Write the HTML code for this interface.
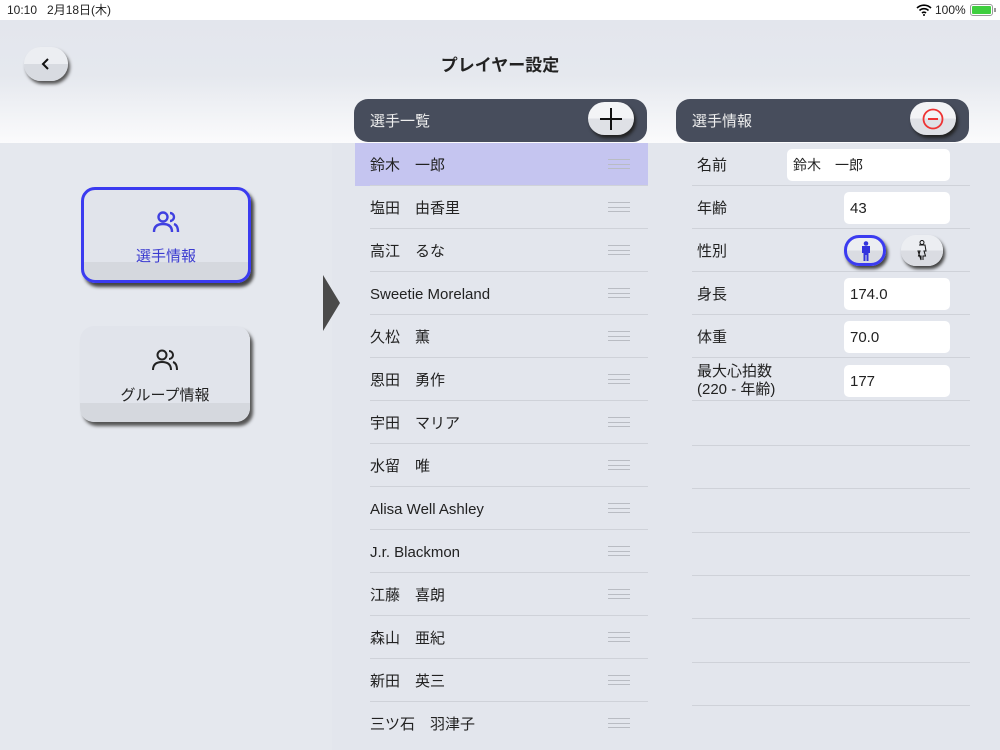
<!DOCTYPE html>
<html><head><meta charset="utf-8"><style>
*{box-sizing:border-box;margin:0;padding:0}
body{width:1000px;height:750px;overflow:hidden;background:#e3e6ed;font-family:"Liberation Sans","Noto Sans CJK JP",sans-serif;color:#222;position:relative}
.abs{position:absolute}
.status{left:0;top:0;width:1000px;height:20px;background:#fff;font-size:12px;line-height:20px}
.hdr{left:0;top:20px;width:1000px;height:123px;background:linear-gradient(#e3e6ed 0%,#e5e8ee 45%,#fbfbfc 100%)}
.title{left:0;top:54px;width:1000px;text-align:center;font-size:17px;font-weight:bold;line-height:24px}
.back{left:24px;top:47px;width:44px;height:34px;border-radius:17px;background:linear-gradient(#eceef2 50%,#d8dbe1 50%);box-shadow:2px 3px 3px #555}
.bar{height:43px;background:#474d5c;border-radius:14px;color:#eee;font-size:15px;line-height:45px;padding-left:16px}
.pill{width:46px;height:33px;border-radius:17px;background:linear-gradient(#f3f4f6 50%,#dfe1e6 50%);box-shadow:2px 3px 3px #222}
.row{left:370px;width:278px;height:43px;border-bottom:1px solid #cfd2d9;font-size:15px;line-height:45px}
.ham{right:18px;top:16px;width:22px;height:10px;border-top:1px solid #b9bcc3;border-bottom:1px solid #b9bcc3}
.ham:after{content:"";position:absolute;left:0;top:4px;width:22px;border-top:1px solid #b9bcc3}
.irow{left:692px;width:278px;height:43px;border-bottom:1px solid #cfd2d9;font-size:15px}
.lab{left:5px;top:0;line-height:45px}
.inp{background:#fff;border-radius:5px;height:32px;font-size:14px;line-height:33px;padding-left:6px}
.lbtn{width:170px;height:96px;border-radius:14px;background:linear-gradient(#e1e4eb 80%,#d5d8de 80%);box-shadow:3px 4px 3px #555;text-align:center;font-size:15px}
</style></head><body>
<div class="abs status"><span class="abs" style="left:7px;top:0">10:10&nbsp;&nbsp;&nbsp;2月18日(木)</span>
<svg class="abs" style="left:916px;top:4px" width="16" height="12" viewBox="0 0 16 12"><path d="M1 4a10 10 0 0 1 14 0M3.5 6.5a6.5 6.5 0 0 1 9 0M6 9a3 3 0 0 1 4 0" stroke="#000" stroke-width="1.6" fill="none"/><circle cx="8" cy="11" r="1" fill="#000"/></svg>
<span class="abs" style="left:935px;top:0">100%</span>
<div class="abs" style="left:970px;top:4px;width:23px;height:12px;border:1px solid #999;border-radius:3px;padding:1px"><div style="width:100%;height:100%;background:#3fcf3f;border-radius:1px"></div></div>
<div class="abs" style="left:994px;top:8px;width:2px;height:4px;background:#999"></div></div>
<div class="abs hdr"></div>
<div class="abs title">プレイヤー設定</div>
<div class="abs back"><svg class="abs" style="left:16px;top:10px" width="12" height="14"><path d="M8 2L3 7l5 5" stroke="#111" stroke-width="2" fill="none"/></svg></div>
<div class="abs" style="left:332px;top:143px;width:668px;height:607px;background:#e3e6ed"></div>
<div class="abs" style="left:0;top:143px;width:332px;height:607px;background:#e5e8ee"></div>
<div class="abs lbtn" style="left:81px;top:187px;border:3px solid #3b3bf0;color:#3b3bd0;box-shadow:3px 4px 3px #444">
<svg style="margin-top:20px" width="28" height="24" viewBox="0 0 28 24" fill="none" stroke="#4040e0" stroke-width="2.4"><circle cx="11" cy="7" r="4.5"/><path d="M2 22c0-6 4-8 9-8s9 2 9 8M18 3a4 4 0 0 1 0 8M22 14c3 1 4 4 4 8"/></svg>
<div style="margin-top:8px;line-height:22px">選手情報</div></div>
<div class="abs lbtn" style="left:80px;top:326px">
<svg style="margin-top:22px" width="28" height="24" viewBox="0 0 28 24" fill="none" stroke="#222" stroke-width="2"><circle cx="11" cy="7" r="4.5"/><path d="M2 22c0-6 4-8 9-8s9 2 9 8M18 3a4 4 0 0 1 0 8M22 14c3 1 4 4 4 8"/></svg>
<div style="margin-top:9px;line-height:22px">グループ情報</div></div>
<svg class="abs" style="left:323px;top:275px" width="18" height="57"><path d="M0 0L17 28L0 56Z" fill="#4a4a4a"/></svg>

<div class="abs bar" style="left:354px;top:99px;width:293px">選手一覧</div>
<div class="abs pill" style="left:588px;top:102px"><svg class="abs" style="left:11px;top:5px" width="24" height="24"><path d="M12 1v22M1 12h22" stroke="#111" stroke-width="2"/></svg></div>
<div class="abs bar" style="left:676px;top:99px;width:293px">選手情報</div>
<div class="abs pill" style="left:910px;top:102px"><svg class="abs" style="left:12px;top:6px" width="22" height="22"><circle cx="11" cy="11" r="9.5" stroke="#e33" stroke-width="1.8" fill="none"/><path d="M6 11h10" stroke="#e33" stroke-width="2"/></svg></div>

<div class="abs" style="left:355px;top:143px;width:293px;height:43px;background:#c5c5f0"></div>
<div class="abs row" style="top:143px">鈴木　一郎<div class="abs ham"></div></div>
<div class="abs row" style="top:186px">塩田　由香里<div class="abs ham"></div></div>
<div class="abs row" style="top:229px">高江　るな<div class="abs ham"></div></div>
<div class="abs row" style="top:272px">Sweetie Moreland<div class="abs ham"></div></div>
<div class="abs row" style="top:315px">久松　薫<div class="abs ham"></div></div>
<div class="abs row" style="top:358px">恩田　勇作<div class="abs ham"></div></div>
<div class="abs row" style="top:401px">宇田　マリア<div class="abs ham"></div></div>
<div class="abs row" style="top:444px">水留　唯<div class="abs ham"></div></div>
<div class="abs row" style="top:487px">Alisa Well Ashley<div class="abs ham"></div></div>
<div class="abs row" style="top:530px">J.r. Blackmon<div class="abs ham"></div></div>
<div class="abs row" style="top:573px">江藤　喜朗<div class="abs ham"></div></div>
<div class="abs row" style="top:616px">森山　亜紀<div class="abs ham"></div></div>
<div class="abs row" style="top:659px">新田　英三<div class="abs ham"></div></div>
<div class="abs row" style="top:702px;border:none">三ツ石　羽津子<div class="abs ham"></div></div>

<div class="abs irow" style="top:143px"><span class="abs lab">名前</span><div class="abs inp" style="left:95px;top:6px;width:163px">鈴木　一郎</div></div>
<div class="abs irow" style="top:186px"><span class="abs lab">年齢</span><div class="abs inp" style="left:152px;top:6px;width:106px;font-size:15px">43</div></div>
<div class="abs irow" style="top:229px"><span class="abs lab">性別</span>
<div class="abs" style="left:152px;top:6px;width:42px;height:31px;border-radius:15px;border:3px solid #3b3bf0;background:linear-gradient(#eceef2 50%,#dadce2 50%);box-shadow:2px 3px 3px #444"><svg class="abs" style="left:13px;top:3px" width="12" height="20" viewBox="0 0 12 20"><circle cx="6" cy="2.5" r="2.3" fill="#3333dd"/><path d="M2 5h8v7H8.5v8h-2v-6h-1v6h-2v-8H2z" fill="#3333dd"/></svg></div>
<div class="abs" style="left:209px;top:6px;width:42px;height:31px;border-radius:15px;background:linear-gradient(#eceef2 50%,#dadce2 50%);box-shadow:2px 3px 3px #444"><svg class="abs" style="left:15px;top:5px" width="12" height="21" viewBox="0 0 12 21" fill="none" stroke="#111" stroke-width="1"><circle cx="6" cy="2.5" r="2"/><path d="M3 5h6l1 6H8l1.5 5H7v4M5 20v-4H2.5L4 11H2z"/></svg></div></div>
<div class="abs irow" style="top:272px"><span class="abs lab">身長</span><div class="abs inp" style="left:152px;top:6px;width:106px;font-size:15px">174.0</div></div>
<div class="abs irow" style="top:315px"><span class="abs lab">体重</span><div class="abs inp" style="left:152px;top:6px;width:106px;font-size:15px">70.0</div></div>
<div class="abs irow" style="top:358px"><span class="abs" style="left:5px;top:5px;line-height:18px">最大心拍数<br>(220 - 年齢)</span><div class="abs inp" style="left:152px;top:7px;width:106px;font-size:15px">177</div></div>
<div class="abs irow" style="top:403px"></div>
<div class="abs irow" style="top:446px"></div>
<div class="abs irow" style="top:490px"></div>
<div class="abs irow" style="top:533px"></div>
<div class="abs irow" style="top:576px"></div>
<div class="abs irow" style="top:620px"></div>
<div class="abs irow" style="top:663px"></div>
</body></html>
